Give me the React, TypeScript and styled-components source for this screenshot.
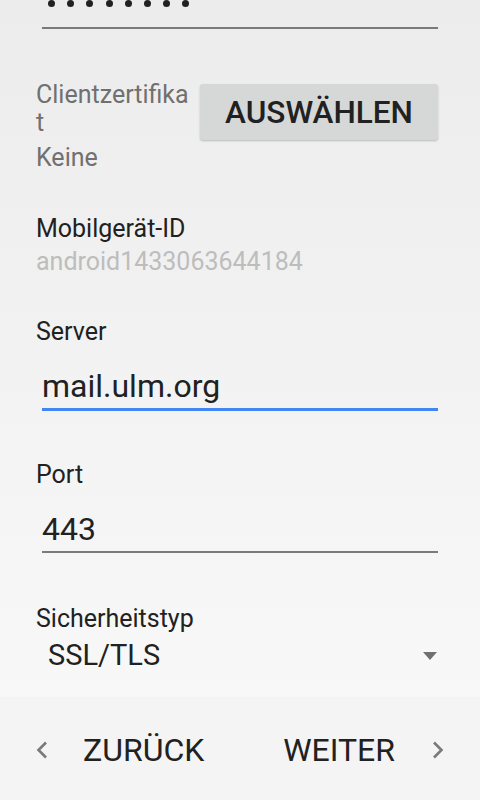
import React from "react";
import styled, { createGlobalStyle } from "styled-components";

const GlobalStyle = createGlobalStyle`
  html, body {
    margin: 0;
    padding: 0;
    background: #f5f5f5;
  }
  body {
    font-family: Roboto, "Noto Sans", "Liberation Sans", sans-serif;
    -webkit-font-smoothing: antialiased;
  }
`;

const App: React.FC = () => {
  return (
    <SScreen>
      <GlobalStyle />
      <SScroll>
        <SContent>
          <SPasswordField>
            {Array.from({ length: 8 }).map((_, i) => (
              <SDot key={i} />
            ))}
          </SPasswordField>

          <SCertRow>
            <SCertInfo>
              <SCertLabel>Clientzertifikat</SCertLabel>
              <SCertValue>Keine</SCertValue>
            </SCertInfo>
            <SSelectButton>AUSWÄHLEN</SSelectButton>
          </SCertRow>

          <SLabel $top={43}>Mobilgerät-ID</SLabel>
          <SDeviceId>android1433063644184</SDeviceId>

          <SLabel $top={42}>Server</SLabel>
          <SInputField $focused>mail.ulm.org</SInputField>

          <SLabel $top={50}>Port</SLabel>
          <SInputField>443</SInputField>

          <SLabel $top={52}>Sicherheitstyp</SLabel>
          <SSpinner>
            <SSpinnerText>SSL/TLS</SSpinnerText>
            <SSpinnerArrow />
          </SSpinner>
        </SContent>
      </SScroll>

      <SNavBar>
        <SNavButton>
          <SChevron viewBox="0 0 12 18">
            <path d="M10 1.5 L2.5 9 L10 16.5" />
          </SChevron>
          <SNavText $left>ZURÜCK</SNavText>
        </SNavButton>
        <SNavButton $right>
          <SNavText>WEITER</SNavText>
          <SChevron viewBox="0 0 12 18">
            <path d="M2 1.5 L9.5 9 L2 16.5" />
          </SChevron>
        </SNavButton>
      </SNavBar>
    </SScreen>
  );
};

const SScreen = styled.div`
  width: 480px;
  height: 800px;
  display: flex;
  flex-direction: column;
  overflow: hidden;
`;

const SScroll = styled.div`
  height: 697px;
  overflow: hidden;
  background: linear-gradient(#ececec, #f8f8f8);
`;

const SContent = styled.div`
  display: flex;
  flex-direction: column;
  padding: 0 42px 0 36px;
`;

const SPasswordField = styled.div`
  height: 27px;
  display: flex;
  align-items: flex-start;
  gap: 12.2px;
  padding-left: 6px;
  margin-left: 6px;
  border-bottom: 2px solid #7a7a7a;
`;

const SDot = styled.span`
  width: 7px;
  height: 7px;
  margin-top: -0.5px;
  border-radius: 50%;
  background: #212121;
  flex: none;
`;

const SCertRow = styled.div`
  display: flex;
  align-items: flex-start;
  margin-top: 52px;
`;

const SCertInfo = styled.div`
  width: 155px;
  margin-right: 9px;
  display: flex;
  flex-direction: column;
`;

const SCertLabel = styled.div`
  font-size: 25px;
  line-height: 28px;
  color: #707070;
  word-break: break-all;
`;

const SCertValue = styled.div`
  margin-top: 7px;
  font-size: 25px;
  line-height: 28px;
  color: #707070;
`;

const SSelectButton = styled.button`
  margin-top: 3px;
  flex: 1;
  height: 56px;
  border: none;
  border-radius: 3px;
  background: #d6d7d7;
  box-shadow: 0 1px 2px rgba(0, 0, 0, 0.22);
  font-family: Roboto, "Liberation Sans", sans-serif;
  font-weight: 500;
  font-size: 31.5px;
  color: #212121;
  padding: 0;
`;

const SLabel = styled.div<{ $top: number }>`
  margin-top: ${(p) => p.$top}px;
  font-size: 25px;
  line-height: 28px;
  color: #212121;
`;

const SDeviceId = styled.div`
  margin-top: 5px;
  font-size: 25px;
  line-height: 28px;
  color: #bdbdbd;
`;

const SInputField = styled.div<{ $focused?: boolean }>`
  margin-top: 20px;
  margin-left: 6px;
  font-size: 32px;
  line-height: 40px;
  color: #212121;
  padding-bottom: 2px;
  border-bottom: ${(p) => (p.$focused ? "3px solid #4285f4" : "2px solid #7a7a7a")};
`;

const SSpinner = styled.div`
  margin-top: 2px;
  display: flex;
  align-items: center;
  justify-content: space-between;
  padding-left: 12px;
`;

const SSpinnerText = styled.div`
  font-size: 29px;
  line-height: 40px;
  color: #212121;
`;

const SSpinnerArrow = styled.span`
  width: 0;
  height: 0;
  border-left: 7.5px solid transparent;
  border-right: 7.5px solid transparent;
  border-top: 8px solid #707070;
  margin-right: 1px;
  margin-top: 2px;
`;

const SNavBar = styled.div`
  flex: 1;
  display: flex;
  background: #f4f4f4;
`;

const SNavButton = styled.div<{ $right?: boolean }>`
  flex: 1;
  display: flex;
  align-items: center;
  justify-content: ${(p) => (p.$right ? "flex-end" : "flex-start")};
  padding: ${(p) => (p.$right ? "0 36px 0 0" : "0 0 0 36px")};
  margin-top: 2px;
`;

const SNavText = styled.span<{ $left?: boolean }>`
  font-size: 32px;
  line-height: 40px;
  color: #212121;
  margin: ${(p) => (p.$left ? "0 0 0 35px" : "0 37px 0 0")};
`;

const SChevron = styled.svg`
  width: 12px;
  height: 18px;
  fill: none;
  stroke: #7a7a7a;
  stroke-width: 2.6;
  flex: none;
`;

export default App;
